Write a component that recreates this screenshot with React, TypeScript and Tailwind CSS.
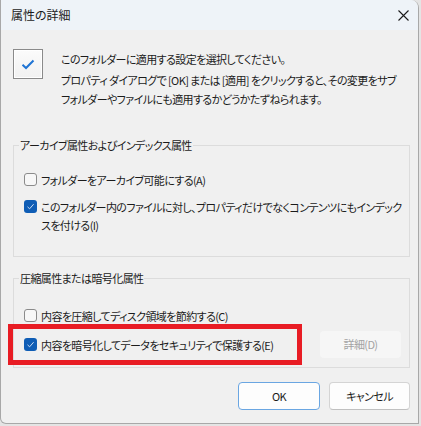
import React from 'react'

const font = "[font-family:'Noto_Sans_CJK_JP','Noto_Sans',sans-serif] [font-feature-settings:'palt'_1]"

function SmallBox({ checked }: { checked?: boolean }) {
  if (checked) {
    return (
      <span className="flex h-[13px] w-[13px] shrink-0 items-center justify-center rounded-[3px] bg-[#0f5db5]">
        <svg width="9" height="9" viewBox="0 0 9 9" fill="none">
          <path d="M1.5 4.8 L3.6 6.8 L7.6 2.2" stroke="#c9dcf3" strokeWidth="1" />
        </svg>
      </span>
    )
  }
  return <span className="block h-[13px] w-[13px] shrink-0 rounded-[3px] border border-[#8b8b8b] bg-[#f7f7f7]" />
}

function Row({ checked, children }: { checked?: boolean; children: React.ReactNode }) {
  return (
    <div className="flex items-start gap-[4px] leading-[18px]">
      <span className="mt-[2px] block">
        <SmallBox checked={checked} />
      </span>
      <span className="whitespace-nowrap">{children}</span>
    </div>
  )
}

export default function App() {
  return (
    <div className={`h-[426px] w-[421px] bg-[#e4e4e4] text-[11px] tracking-[-0.6px] text-[#1b1b1b] ${font}`}>
      <div className="flex h-[424px] w-[419px] flex-col overflow-hidden rounded-tr-[8px] rounded-bl-[6px] border-x border-b border-[#a8a8a8] bg-[#f0f0f0]">
        {/* title bar */}
        <div className="flex h-[30px] items-center justify-between bg-[#eef3f8] pl-[10px] pr-[9px]">
          <span className="text-[12px] leading-[16px] tracking-normal">属性の詳細</span>
          <svg width="11" height="11" viewBox="0 0 11 11" fill="none">
            <path d="M0.5 0.5 L10.5 10.5 M10.5 0.5 L0.5 10.5" stroke="#1b1b1b" strokeWidth="1.1" />
          </svg>
        </div>

        {/* intro */}
        <div className="mt-[19px] flex pl-[12px]">
          <div className="flex h-[30px] w-[30px] shrink-0 items-center justify-center border border-[#8a8a8a] bg-gradient-to-b from-[#fbfbfb] to-[#f1f1f1] shadow-[inset_0_0_0_1px_#ffffff]">
            <svg width="14" height="11" viewBox="0 0 14 11" fill="none">
              <path d="M1.5 5.8 L5 9 L12.5 1.5" stroke="#1f74d4" strokeWidth="2" />
            </svg>
          </div>
          <div className="ml-[18px] whitespace-nowrap">
            <p className="mt-[1px] leading-[18px]">このフォルダーに適用する設定を選択してください。</p>
            <p className="mt-[3px] leading-[19px]">
              プロパティ ダイアログで [OK] または [適用] をクリックすると、その変更をサブ
              <br />
              フォルダーやファイルにも適用するかどうかたずねられます。
            </p>
          </div>
        </div>

        {/* archive group */}
        <fieldset className="ml-[12px] mt-[28px] h-[120px] w-[397px] border border-[#dcdcdc] pl-[10px]">
          <legend className="ml-[-5px] px-[1px] leading-[16px]">アーカイブ属性およびインデックス属性</legend>
          <div className="mt-[18px] flex flex-col gap-[9px]">
            <Row>フォルダーをアーカイブ可能にする(A)</Row>
            <Row checked>
              このフォルダー内のファイルに対し、プロパティだけでなくコンテンツにもインデック
              <br />
              スを付ける(I)
            </Row>
          </div>
        </fieldset>

        {/* compress group */}
        <fieldset className="relative ml-[12px] mt-[13px] h-[98px] w-[397px] border border-[#dcdcdc] pl-[10px] pr-[8px]">
          <legend className="ml-[-5px] px-[1px] leading-[16px]">圧縮属性または暗号化属性</legend>
          <div className="mt-[21px]">
            <Row>内容を圧縮してディスク領域を節約する(C)</Row>
          </div>
          <div className="mt-[6px] flex items-center justify-between">
            <Row checked>内容を暗号化してデータをセキュリティで保護する(E)</Row>
            <button className="h-[27px] w-[81px] rounded-[4px] bg-[#f6f6f6] text-[#a3a3a3]">詳細(D)</button>
          </div>
          {/* red highlight */}
          <div className="pointer-events-none absolute left-[-6px] top-[38px] h-[41px] w-[294px] border-[5px] border-[#e81c24]" />
        </fieldset>

        {/* buttons */}
        <div className="mt-[14px] flex justify-end gap-[9px] pr-[8px]">
          <button className="h-[28px] w-[82px] rounded-[4px] border border-[#6aa6e2] bg-[#fdfdfd]">OK</button>
          <button className="h-[28px] w-[81px] rounded-[4px] border border-[#d4d4d4] border-b-[#c0c0c0] bg-[#fdfdfd]">キャンセル</button>
        </div>
      </div>
    </div>
  )
}
